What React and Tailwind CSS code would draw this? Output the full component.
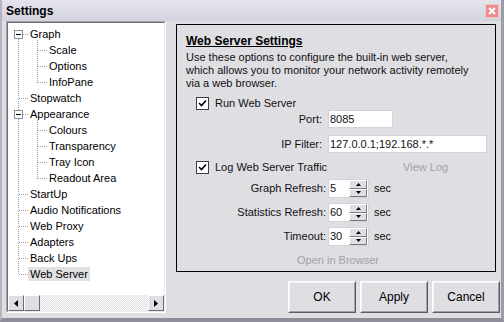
import React from "react";

const font = { fontFamily: '"Liberation Sans", Arial, sans-serif' };

const treeRows = [
  { label: "Graph", level: 0, box: true },
  { label: "Scale", level: 1 },
  { label: "Options", level: 1 },
  { label: "InfoPane", level: 1 },
  { label: "Stopwatch", level: 0 },
  { label: "Appearance", level: 0, box: true },
  { label: "Colours", level: 1 },
  { label: "Transparency", level: 1 },
  { label: "Tray Icon", level: 1 },
  { label: "Readout Area", level: 1 },
  { label: "StartUp", level: 0 },
  { label: "Audio Notifications", level: 0 },
  { label: "Web Proxy", level: 0 },
  { label: "Adapters", level: 0 },
  { label: "Back Ups", level: 0 },
  { label: "Web Server", level: 0, selected: true },
];

function Connectors() {
  // local coords: row i centre = 11 + i * 16
  const cy = (i) => 11 + i * 16 + 0.5;
  const dot = { stroke: "#a0a0a0", strokeDasharray: "1 1", shapeRendering: "crispEdges" };
  return (
    <svg className="absolute left-0 top-0" width="150" height="270">
      <line x1="10.5" y1="16" x2="10.5" y2={cy(15)} {...dot} />
      {treeRows.map((r, i) =>
        r.level === 0 ? (
          <line key={i} x1={r.box ? 15 : 11} y1={cy(i)} x2="20" y2={cy(i)} {...dot} />
        ) : (
          <line key={i} x1="30" y1={cy(i)} x2="39" y2={cy(i)} {...dot} />
        )
      )}
      <line x1="29.5" y1="17" x2="29.5" y2={cy(3)} {...dot} />
      <line x1="29.5" y1={cy(5) + 5} x2="29.5" y2={cy(9)} {...dot} />
      {[0, 5].map((i) => (
        <g key={i} shapeRendering="crispEdges">
          <rect x="6.5" y={cy(i) - 4} width="8" height="8" fill="#fff" stroke="#8c8c94" />
          <line x1="8" y1={cy(i)} x2="13" y2={cy(i)} stroke="#000" />
        </g>
      ))}
    </svg>
  );
}

function ScrollButton({ dir }) {
  return (
    <div className="w-[16px] h-[16px] bg-[#dedee3] border border-t-white border-l-white border-b-[#6b6b70] border-r-[#6b6b70] flex items-center justify-center">
      <svg width="4" height="7">
        {dir === "left" ? <polygon points="4,0 0,3.5 4,7" fill="#000" /> : <polygon points="0,0 4,3.5 0,7" fill="#000" />}
      </svg>
    </div>
  );
}

function Tree() {
  return (
    <div className="ml-[4px] w-[160px] h-[292px] border border-t-[#a5a5ab] border-l-[#a5a5ab] border-b-white border-r-white">
      <div className="w-full h-full border border-t-[#6e6e74] border-l-[#6e6e74] border-b-[#e9e9ee] border-r-[#e9e9ee] bg-white flex flex-col">
        <div className="relative flex-1 pt-[3px]">
          <Connectors />
          {treeRows.map((r) => (
            <div
              key={r.label}
              className={`h-[16px] flex items-center ${r.level === 0 ? "pl-[20px]" : "pl-[39px]"}`}
            >
              <span className={`px-[2px] h-[14px] leading-[14px] text-black ${r.selected ? "bg-[#e1e1e4]" : ""}`}>
                {r.label}
              </span>
            </div>
          ))}
        </div>
        <div className="h-[16px] flex">
          <ScrollButton dir="left" />
          <div className="w-[16px] h-[16px] bg-[#dedee3] border border-t-white border-l-white border-b-[#6b6b70] border-r-[#6b6b70]" />
          <div className="flex-1 bg-[repeating-conic-gradient(#ffffff_0_25%,#dcdce0_0_50%)] bg-[length:2px_2px]" />
          <ScrollButton dir="right" />
        </div>
      </div>
    </div>
  );
}

function Check({ label }) {
  return (
    <div className="flex items-center">
      <div className="w-[13px] h-[13px] bg-white border border-[#3c3c44] flex items-center justify-center">
        <svg width="9" height="9" viewBox="0 0 9 9">
          <polyline points="1,4 3.5,6.5 8,1.5" fill="none" stroke="#000" strokeWidth="1.6" />
        </svg>
      </div>
      <span className="ml-[6px]">{label}</span>
    </div>
  );
}

function Spin({ label, value }) {
  return (
    <div className="h-[19px] flex items-center mt-[5px]">
      <div className="w-[140px] text-right">{label}</div>
      <div className="ml-[2px] w-[41px] h-[19px] bg-white border border-[#d2d2d8] flex items-center">
        <span className="pl-[1px] flex-1 leading-[17px]">{value}</span>
        <div className="w-[18px] h-[17px] flex flex-col mr-[1px]">
          {[0, 1].map((k) => (
            <div
              key={k}
              className="flex-1 bg-[#dedee3] border border-t-white border-l-white border-b-[#7a7a80] border-r-[#7a7a80] flex items-center justify-center"
            >
              <svg width="5" height="3">
                {k === 0 ? <polygon points="0,3 2.5,0 5,3" fill="#000" /> : <polygon points="0,0 2.5,3 5,0" fill="#000" />}
              </svg>
            </div>
          ))}
        </div>
      </div>
      <span className="ml-[5px]">sec</span>
    </div>
  );
}

function Button({ children }) {
  return (
    <div className="w-[68px] h-[32px] border border-t-white border-l-white border-b-[#5a5a60] border-r-[#5a5a60]">
      <div className="w-full h-full border border-t-[#f2f2f5] border-l-[#f2f2f5] border-b-[#a0a0a8] border-r-[#a0a0a8] flex items-center justify-center text-[12px] text-black">
        {children}
      </div>
    </div>
  );
}

export default function App() {
  return (
    <div
      className="w-[504px] h-[322px] bg-[#dedee3] text-[11px] text-[#111] overflow-hidden border-l-[2px] border-l-[#b4b4be] border-r-[3px] border-r-[#9c9ca8] border-b-[4px] border-b-[#8e8e9a]"
      style={font}
    >
      <div className="h-[21px] flex items-center justify-between pl-[4px] pr-[2px] bg-gradient-to-b from-[#e4e4ee] to-[#d4d4de]">
        <span className="font-bold text-[12px] text-black">Settings</span>
        <div className="w-[14px] h-[14px] bg-[#ec8c8c] border border-[#f4c4c4] flex items-center justify-center">
          <svg width="8" height="8" viewBox="0 0 8 8">
            <path d="M1 1 L7 7 M7 1 L1 7" stroke="#fff" strokeWidth="2" />
          </svg>
        </div>
      </div>
      <div className="flex">
        <Tree />
        <div className="ml-[10px] w-[324px] flex flex-col">
          <div className="mt-[3px] w-[320px] h-[248px] border border-black pl-[9px]">
            <div className="mt-[10px] h-[13px] leading-[13px] font-bold underline text-[12px] text-black">
              Web Server Settings
            </div>
            <div className="mt-[3px] leading-[13px]">
              Use these options to configure the built-in web server,
              <br />
              which allows you to monitor your network activity remotely
              <br />
              via a web browser.
            </div>
            <div className="mt-[6px] h-[14px] pl-[10px] flex items-center">
              <Check label="Run Web Server" />
            </div>
            <div className="h-[18px] flex items-center">
              <div className="w-[136px] text-right">Port:</div>
              <div className="ml-[6px] w-[65px] h-[18px] bg-white border border-[#d2d2d8] pl-[1px] leading-[16px]">8085</div>
            </div>
            <div className="mt-[7px] h-[18px] flex items-center">
              <div className="w-[136px] text-right">IP Filter:</div>
              <div className="ml-[6px] w-[159px] h-[18px] bg-white border border-[#d2d2d8] pl-[1px] leading-[16px]">
                127.0.0.1;192.168.*.*
              </div>
            </div>
            <div className="mt-[7px] h-[14px] pl-[10px] flex items-center">
              <Check label="Log Web Server Traffic" />
              <span className="ml-[76px] text-[#a2a2aa]">View Log</span>
            </div>
            <Spin label="Graph Refresh:" value="5" />
            <Spin label="Statistics Refresh:" value="60" />
            <Spin label="Timeout:" value="30" />
            <div className="mt-[7px] h-[14px] flex items-center">
              <span className="ml-[111px] text-[#a2a2aa]">Open in Browser</span>
            </div>
          </div>
          <div className="mt-[9px] flex justify-end gap-[4px]">
            <Button>OK</Button>
            <Button>Apply</Button>
            <Button>Cancel</Button>
          </div>
        </div>
      </div>
    </div>
  );
}
